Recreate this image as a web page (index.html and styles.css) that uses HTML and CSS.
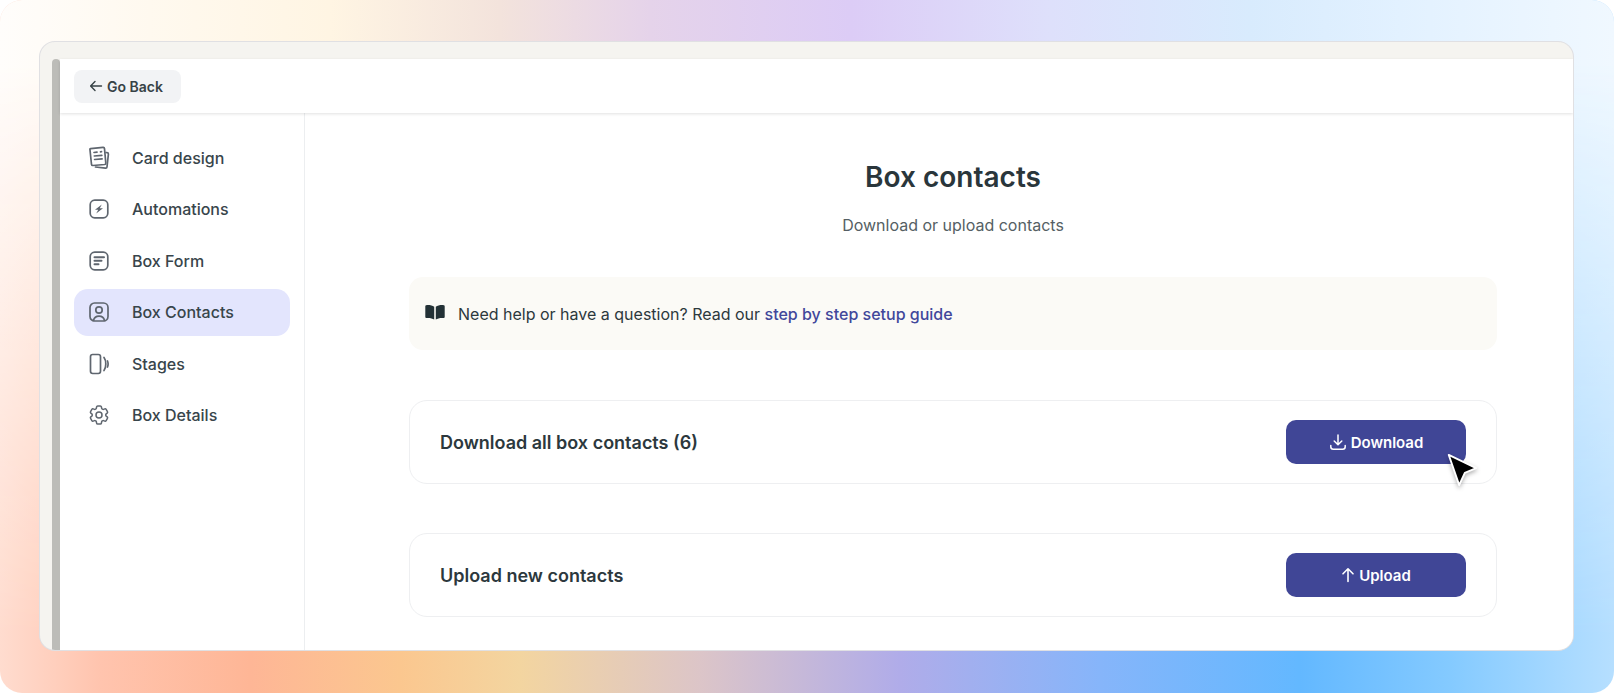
FILE: index.html
```html
<!DOCTYPE html>
<html lang="en">
<head>
    <meta charset="UTF-8">
    <meta name="viewport" content="width=device-width, initial-scale=1.0">
    <title>Box contacts</title>
    <link rel="stylesheet" href="styles.css">
</head>
<body>
    <div class="frame">
        <div class="window">
            <div class="scrollbar"></div>
            <div class="app">
                <header class="topbar">
                    <button class="back-button">
                        <svg class="back-icon" viewBox="0 0 14 14" fill="none" stroke="currentColor" stroke-width="1.4" stroke-linecap="round" stroke-linejoin="round"><path d="M12.5 7H1.7M6 2.6 1.6 7 6 11.4"/></svg>
                        Go Back
                    </button>
                </header>
                <div class="app-body">
                    <nav class="sidebar">
                        <a class="nav-item">
                            <svg class="nav-icon" viewBox="0 0 24 24" fill="none" stroke="currentColor" stroke-width="1.7" stroke-linejoin="round" stroke-linecap="round"><path d="M3.6 2.6 16 1.4c.9-.1 1.4.4 1.5 1.2L18.800 17c.1.9-.4 1.400-1.200 1.500L6 19.500c-.9.1-1.400-.4-1.500-1.200L3 4c-.1-.8-.2-1.300.6-1.400Z"/><path d="M19 6.500l1.200.2c.8.1 1.300.7 1.200 1.500L20 21c-.1.800-.7 1.300-1.500 1.200L8.500 21"/><path d="M7 6.500l3-.3M13.500 5.800l1-.1M7.300 10l7.500-.7M7.600 13.500l7.500-.7"/></svg>
                            Card design
                        </a>
                        <a class="nav-item">
                            <svg class="nav-icon" viewBox="0 0 24 24" fill="none" stroke="currentColor" stroke-width="1.7"><rect x="3.200" y="3.200" width="17.600" height="17.600" rx="4.500"/><path d="M14.800 7.500 8 12.800h3.200L9.200 16.500l6.800-5.300h-3.200Z" fill="currentColor" stroke="none"/></svg>
                            Automations
                        </a>
                        <a class="nav-item">
                            <svg class="nav-icon" viewBox="0 0 24 24" fill="none" stroke="currentColor" stroke-width="1.7" stroke-linecap="round"><rect x="3.200" y="3.200" width="17.600" height="17.600" rx="4.500"/><path d="M7.500 8.300h9.500M7.500 11.800h7M7.500 15.300h4" stroke-width="2"/></svg>
                            Box Form
                        </a>
                        <a class="nav-item nav-item-active">
                            <svg class="nav-icon" viewBox="0 0 24 24" fill="none" stroke="currentColor" stroke-width="1.7" stroke-linecap="round"><rect x="3" y="3" width="18" height="18" rx="4.500"/><circle cx="12" cy="10" r="3.200"/><path d="M6.500 20.500c.7-3 2.800-4.300 5.500-4.300s4.800 1.300 5.500 4.300"/></svg>
                            Box Contacts
                        </a>
                        <a class="nav-item">
                            <svg class="nav-icon" viewBox="0 0 24 24" fill="none" stroke="currentColor" stroke-width="1.7" stroke-linecap="round"><rect x="3.500" y="2.500" width="10" height="19" rx="2.200"/><path d="M17 5.500c1.200 1.500 1.800 3.800 1.800 6.500s-.6 5-1.800 6.500"/><path d="M20.500 9c.4 1 .6 2 .6 3s-.2 2-.6 3"/></svg>
                            Stages
                        </a>
                        <a class="nav-item">
                            <svg class="nav-icon" viewBox="0 0 24 24" fill="none" stroke="currentColor" stroke-width="1.500" stroke-linejoin="round"><path d="M9.594 3.940c.09-.542.56-.94 1.110-.94h2.593c.55 0 1.020.398 1.110.94l.213 1.281c.063.374.313.686.645.87.074.04.147.083.22.127.325.196.72.257 1.075.124l1.217-.456a1.125 1.125 0 0 1 1.370.49l1.296 2.247a1.125 1.125 0 0 1-.26 1.431l-1.003.827c-.293.241-.438.613-.43.992a7.723 7.723 0 0 1 0 .255c-.008.378.137.75.43.991l1.004.827c.424.35.534.955.26 1.430l-1.298 2.247a1.125 1.125 0 0 1-1.369.491l-1.217-.456c-.355-.133-.75-.072-1.076.124a6.470 6.470 0 0 1-.22.128c-.331.183-.581.495-.644.869l-.213 1.281c-.09.543-.56.94-1.110.94h-2.594c-.55 0-1.019-.398-1.110-.94l-.213-1.281c-.062-.374-.312-.686-.644-.87a6.520 6.520 0 0 1-.22-.127c-.325-.196-.72-.257-1.076-.124l-1.217.456a1.125 1.125 0 0 1-1.369-.49l-1.297-2.247a1.125 1.125 0 0 1 .26-1.431l1.004-.827c.292-.24.437-.613.43-.991a6.932 6.932 0 0 1 0-.255c.007-.38-.138-.751-.43-.992l-1.004-.827a1.125 1.125 0 0 1-.26-1.430l1.297-2.247a1.125 1.125 0 0 1 1.370-.491l1.216.456c.356.133.751.072 1.076-.124.072-.044.146-.086.22-.127.332-.184.582-.496.644-.87l.214-1.280Z"/><circle cx="12" cy="12" r="3"/></svg>
                            Box Details
                        </a>
                    </nav>
                    <main class="content">
                        <h1 class="page-title">Box contacts</h1>
                        <p class="page-subtitle">Download or upload contacts</p>

                        <div class="help-box">
                            <svg class="help-icon" viewBox="0 0 20 18" fill="currentColor"><path d="M9.200 2.700C7.500 1.500 4.200.9 1.200 1.200.6 1.300.3 1.700.3 2.200v10.900c0 .6.5 1 1.100.9 3-.3 5.900.2 7.800 1.500V2.700ZM10.800 2.700c1.700-1.200 5-1.800 8-1.500.6.1.9.500.9 1v10.900c0 .6-.5 1-1.100.9-3-.3-5.900.2-7.800 1.500V2.700Z"/></svg>
                            <span>Need help or have a question? Read our <a class="help-link">step by step setup guide</a></span>
                        </div>

                        <section class="action-card">
                            <h2 class="action-title">Download all box contacts (6)</h2>
                            <button class="action-button">
                                <svg class="button-icon" viewBox="0 0 18 18" fill="none" stroke="currentColor" stroke-width="1.500" stroke-linecap="round" stroke-linejoin="round"><path d="M9 2v9.500M5.200 8 9 11.800 12.800 8M1.800 12.500v1.200c0 1.500 1 2.500 2.500 2.500h9.400c1.500 0 2.500-1 2.500-2.500v-1.200"/></svg>
                                Download
                            </button>
                            <svg class="cursor" viewBox="0 0 36 40"><path d="M4 3 33 17 21 22 15 35Z" fill="#000" stroke="#fff" stroke-width="2" stroke-linejoin="round"/></svg>
                        </section>

                        <section class="action-card">
                            <h2 class="action-title">Upload new contacts</h2>
                            <button class="action-button">
                                <svg class="button-icon upload-icon" viewBox="0 0 14 16" fill="none" stroke="currentColor" stroke-width="1.600" stroke-linecap="round" stroke-linejoin="round"><path d="M7 14.500V1.800M2 6.800 7 1.800l5 5"/></svg>
                                Upload
                            </button>
                        </section>
                    </main>
                </div>
            </div>
        </div>
    </div>
</body>
</html>
```

FILE: styles.css
```css
* {
    box-sizing: border-box;
}
html, body {
    margin: 0;
    height: 100%;
    background: #fff;
}
body {
    font-family: Inter, "Liberation Sans", sans-serif;
    color: #2c383d;
    overflow: hidden;
}
.frame {
    position: relative;
    height: 693px;
    padding: 41px 40px 42px 39px;
    border-radius: 22px;
    overflow: hidden;
    background: linear-gradient(90deg, #ffdccf 0, #ffc4ae 100px, #feb696 250px, #fbc78f 400px, #f3d5a0 520px, #dcc5c8 700px, #b0ace9 900px, #86b5fa 1100px, #63b8ff 1300px, #84caff 1450px, #b6dfff 1614px);
}
/* top half of the gradient, fades out into the bottom one */
.frame::before {
    content: "";
    position: absolute;
    inset: 0;
    background: linear-gradient(90deg, #fffdfb 0, #fff9ef 150px, #fff5e3 330px, #f3e3dc 500px, #e5d3ea 650px, #dcccf6 850px, #dee0fb 1050px, #d8ebfd 1250px, #e2f1ff 1400px, #f0f8ff 1614px);
    -webkit-mask-image: linear-gradient(180deg, #000 0, #000 60px, transparent 640px);
    mask-image: linear-gradient(180deg, #000 0, #000 60px, transparent 640px);
}
.window {
    position: relative;
    display: flex;
    height: 610px;
    padding: 17px 0 0 12px;
    background: #f5f4f0;
    border: 1px solid rgba(200, 200, 210, 0.45);
    border-radius: 16px;
    overflow: hidden;
}
.scrollbar {
    flex: 0 0 8px;
    background: #bcbcb8;
    border-radius: 4px 4px 0 0;
}
.app {
    flex: 1;
    display: flex;
    flex-direction: column;
    min-width: 0;
    background: #fff;
}
.topbar {
    display: flex;
    align-items: center;
    height: 54px;
    flex: 0 0 54px;
    padding: 0 14px;
    background: #fff;
    box-shadow: 0 1px 3px rgba(0,0,0,0.12);
    position: relative;
}
.back-button {
    display: flex;
    align-items: center;
    gap: 4px;
    width: 107px;
    height: 33px;
    padding: 0 0 0 15px;
    background: #f2f3f5;
    border: none;
    border-radius: 8px;
    font-family: inherit;
    font-size: 14px;
    font-weight: 600;
    color: #374246;
}
.back-icon {
    width: 14px;
    height: 14px;
}
.app-body {
    flex: 1;
    display: flex;
    min-height: 0;
}
.sidebar {
    flex: 0 0 245px;
    padding: 21px 14px 0;
    border-right: 1px solid #eceef0;
}
.nav-item {
    display: flex;
    align-items: center;
    gap: 21px;
    height: 47px;
    margin-bottom: 4.500px;
    padding-left: 13px;
    border-radius: 14px;
    font-size: 16px;
    font-weight: 500;
    color: #38454b;
}
.nav-item-active {
    background: #e3e5fd;
}
.nav-icon {
    width: 24px;
    height: 24px;
    flex: none;
    color: #5f666f;
}
.content {
    flex: 1;
    padding: 0 76px 0 104px;
    min-width: 0;
}
.page-title {
    margin: 46px 0 0;
    font-size: 28px;
    line-height: 36px;
    font-weight: 600;
    text-align: center;
    color: #2a363b;
}
.page-subtitle {
    margin: 18px 0 0;
    font-size: 16px;
    line-height: 24px;
    text-align: center;
    color: #555f64;
}
.help-box {
    display: flex;
    align-items: center;
    gap: 13px;
    height: 73px;
    margin: 40px 0 50px;
    padding: 0 16px;
    background: #fbfaf6;
    border-radius: 14px;
    font-size: 16px;
    color: #2c383d;
}
.help-icon {
    width: 20px;
    height: 18px;
    flex: none;
    margin-top: -2px;
    color: #233136;
}
.help-link {
    color: #41479b;
    font-weight: 500;
}
.action-card {
    position: relative;
    display: flex;
    align-items: center;
    justify-content: space-between;
    height: 84px;
    margin-bottom: 49px;
    padding: 0 30px;
    border: 1px solid #eeeff1;
    border-radius: 18px;
}
.action-title {
    margin: 0;
    font-size: 18px;
    font-weight: 600;
    color: #2c383d;
}
.action-button {
    display: flex;
    align-items: center;
    justify-content: center;
    gap: 4px;
    width: 180px;
    height: 44px;
    border: none;
    border-radius: 10px;
    background: #404696;
    color: #fff;
    font-family: inherit;
    font-size: 15px;
    font-weight: 600;
}
.button-icon {
    width: 18px;
    height: 18px;
}
.upload-icon {
    width: 14px;
    height: 16px;
}
.cursor {
    position: absolute;
    right: 17px;
    top: 51px;
    width: 34px;
    height: 38px;
    filter: drop-shadow(0 2px 2px rgba(0,0,0,0.3));
}
```
